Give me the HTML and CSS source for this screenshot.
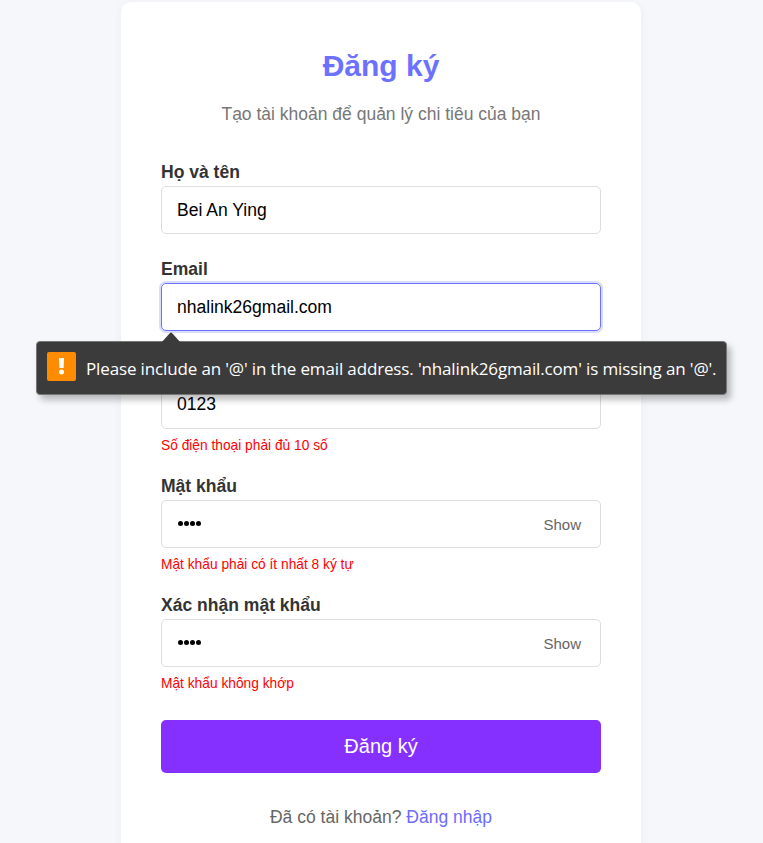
FILE: index.html
```html
<!DOCTYPE html>
<html lang="vi">
<head>
<meta charset="utf-8">
<title>Đăng ký</title>
<link rel="stylesheet" href="styles.css">
</head>
<body>
<main class="card">
  <h1 class="title">Đăng ký</h1>
  <p class="subtitle">Tạo tài khoản để quản lý chi tiêu của bạn</p>
  <form class="form">
    <div class="field">
      <label class="label">Họ và tên</label>
      <div class="input">Bei An Ying</div>
    </div>
    <div class="field">
      <label class="label">Email</label>
      <div class="input focused">nhalink26gmail.com</div>
      <div class="tooltip">
        <svg class="arrow" width="22" height="12" viewBox="0 0 22 12"><path d="M1 12L10 2Q11 1 12 2L21 12" fill="#3b3b3b"/></svg>
        <svg class="warn" width="29" height="29" viewBox="0 0 29 29"><rect width="29" height="29" rx="2" fill="#ff8c00"/><path d="M12 6h5l-.4 10h-4.2z" fill="#fff"/><circle cx="14.5" cy="20" r="2.5" fill="#fff"/></svg>
        <span class="tip-text">Please include an '@' in the email address. 'nhalink26gmail.com' is missing an '@'.</span>
      </div>
    </div>
    <div class="field">
      <label class="label">&nbsp;</label>
      <div class="input"><span class="phone">0123</span></div>
      <p class="error">Số điện thoại phải đủ 10 số</p>
    </div>
    <div class="field">
      <label class="label">Mật khẩu</label>
      <div class="input"><span class="dots"><i></i><i></i><i></i><i></i></span><span class="show">Show</span></div>
      <p class="error">Mật khẩu phải có ít nhất 8 ký tự</p>
    </div>
    <div class="field">
      <label class="label">Xác nhận mật khẩu</label>
      <div class="input"><span class="dots"><i></i><i></i><i></i><i></i></span><span class="show">Show</span></div>
      <p class="error">Mật khẩu không khớp</p>
    </div>
    <button class="submit" type="button">Đăng ký</button>
  </form>
  <p class="login">Đã có tài khoản? <a class="link">Đăng nhập</a></p>
</main>
</body>
</html>
```
FILE: styles.css
```css
* { box-sizing: border-box; }
body { margin: 0; height: 843px; overflow: hidden; background: #f5f7fb; font-family: "Liberation Sans", Arial, sans-serif; color: #333; }
.card { width: 520px; height: 880px; margin: 2px 0 0 121px; padding: 40px; background: #fff; border-radius: 10px; box-shadow: 0 2px 10px rgba(0,0,0,.05); }
.title { margin: 5px 0 0; height: 37px; line-height: 37px; font-size: 30px; text-align: center; color: #6c72ff; }
.subtitle { margin: 20px 0 0; height: 20px; line-height: 20px; font-size: 17.5px; text-align: center; color: #777; }
.form { margin-top: 36px; }
.field { position: relative; height: 97px; }
.field:nth-child(2) { height: 98px; }
.field:nth-child(n+3) { height: 119px; }
.label { display: block; height: 26px; line-height: 24px; font-size: 17.55px; font-weight: bold; }
.input { display: flex; align-items: center; justify-content: space-between; height: 48px; padding: 0 19px 0 15px; border: 1px solid #ddd; border-radius: 5px; font-size: 17.55px; color: #000; }
.phone { padding-bottom: 2px; }
.focused { border-color: #6c72ff; box-shadow: 0 0 0 2px #dadcff; }
.error { margin: 9px 0 0; height: 16px; line-height: 16px; font-size: 13.75px; color: #f00; }
.show { font-size: 15px; color: #666; }
.dots { display: flex; gap: 1px; padding: 0 0 2px 1px; }
.dots i { width: 5px; height: 5px; border-radius: 50%; background: #000; }
.submit { display: block; width: 440px; height: 53px; margin-top: 8px; padding: 0; border: 0; border-radius: 5px; background: #8530ff; color: #fff; font: 20px "Liberation Sans", Arial, sans-serif; }
.login { margin: 34px 0 0; height: 20px; line-height: 20px; font-size: 17.55px; text-align: center; color: #666; }
.link { color: #6c6cff; }
.tooltip { position: absolute; z-index: 2; top: 84px; left: -125px; width: 691px; height: 54px; display: flex; align-items: center; padding: 0 0 4px 10px; gap: 10px; background: #3b3b3b; border: 1px solid #777; border-radius: 4px; box-shadow: 4px 5px 6px rgba(0,0,0,.25); color: #fff; font: 17px "Open Sans", "Noto Sans", sans-serif; white-space: nowrap; }
.warn { flex: none; }
.tip-text { letter-spacing: -.14px; padding-top: 4px; }
.arrow { position: absolute; left: 123px; top: -11px; }
```
